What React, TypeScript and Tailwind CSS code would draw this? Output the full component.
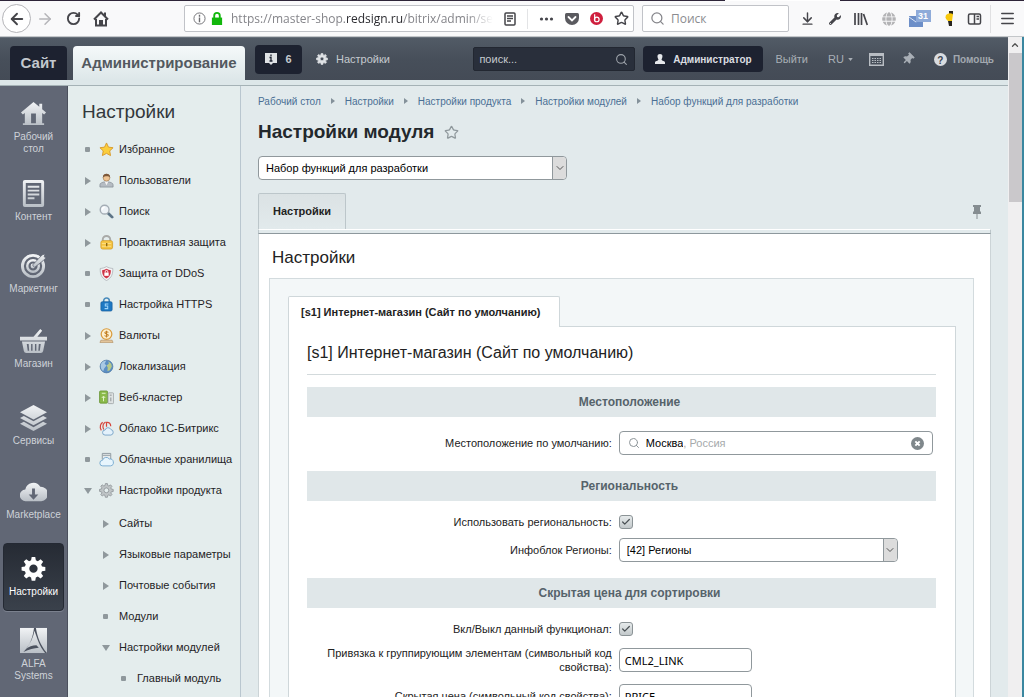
import React from "react";
import {
    ArrowDownToLine,
    ArrowLeft,
    ArrowRight,
    Check,
    ChevronDown,
    ChevronUp,
    Menu,
    RotateCw,
    Search,
    Star,
} from "lucide-react";
import { FaGlobe, FaWrench, FaThumbtack } from "react-icons/fa";

type IconName =
    | "star"
    | "user"
    | "search"
    | "lock"
    | "shield"
    | "https"
    | "coin"
    | "globe"
    | "cluster"
    | "cloud1c"
    | "cloud"
    | "gear";

type MenuItem = {
    label: string;
    marker: "dot" | "right" | "down";
    icon?: IconName;
    level?: 1 | 2;
};

const menu: MenuItem[] = [
    { label: "Избранное", marker: "dot", icon: "star" },
    { label: "Пользователи", marker: "right", icon: "user" },
    { label: "Поиск", marker: "right", icon: "search" },
    { label: "Проактивная защита", marker: "right", icon: "lock" },
    { label: "Защита от DDoS", marker: "dot", icon: "shield" },
    { label: "Настройка HTTPS", marker: "dot", icon: "https" },
    { label: "Валюты", marker: "right", icon: "coin" },
    { label: "Локализация", marker: "right", icon: "globe" },
    { label: "Веб-кластер", marker: "right", icon: "cluster" },
    { label: "Облако 1С-Битрикс", marker: "right", icon: "cloud1c" },
    { label: "Облачные хранилища", marker: "dot", icon: "cloud" },
    { label: "Настройки продукта", marker: "down", icon: "gear" },
];

const subMenu: MenuItem[] = [
    { label: "Сайты", marker: "right", level: 1 },
    { label: "Языковые параметры", marker: "right", level: 1 },
    { label: "Почтовые события", marker: "right", level: 1 },
    { label: "Модули", marker: "dot", level: 1 },
    { label: "Настройки модулей", marker: "down", level: 1 },
    { label: "Главный модуль", marker: "dot", level: 2 },
];

const crumbs = [
    "Рабочий стол",
    "Настройки",
    "Настройки продукта",
    "Настройки модулей",
    "Набор функций для разработки",
];

const gearPath =
    "M10.3 1h3.4l.6 3.2 1.9.8 2.7-1.9 2.4 2.4-1.9 2.7.8 1.9 3.2.6v3.4l-3.2.6-.8 1.9 1.9 2.7-2.4 2.4-2.7-1.9-1.9.8-.6 3.2h-3.4l-.6-3.2-1.9-.8-2.7 1.9-2.4-2.4 1.9-2.7-.8-1.9L.6 14v-3.4l3.2-.6.8-1.9-1.9-2.7L5.100 3.100l2.700 1.900 1.900-.8z M12 8.200a4 4 0 1 0 0 8 4 4 0 0 0 0-8z";

function MenuIcon({ name }: { name: IconName }) {
    return (
        <svg viewBox="0 0 16 16" className="w-[15px] h-[15px] shrink-0" aria-hidden="true">
            {name === "star" && (
                <path d="M8 1l2.100 4.500 4.900.6-3.600 3.400.9 5L8 12.100l-4.400 2.400.9-5L1 6.100l4.900-.6z" fill="#fbce3c" stroke="#d79a2b" />
            )}
            {name === "user" && (
                <>
                    <path d="M1 15v-2.500c0-2 3-2.500 4.500-3h5c1.500.5 4.500 1 4.500 3V15z" fill="#b5bcc3" stroke="#858d95" strokeWidth=".8" />
                    <path d="M6 9h4l-2 4z" fill="#f5f5f5" />
                    <circle cx="8" cy="5" r="3.600" fill="#efc494" stroke="#a17a50" strokeWidth=".7" />
                    <path d="M4.200 5C3.500-.5 12.500-.5 11.800 5 10.500 3 6 3 4.200 5z" fill="#7c583b" />
                </>
            )}
            {name === "search" && (
                <>
                    <path d="M9.500 9.500l4.500 4.500" stroke="#5d7486" strokeWidth="3" strokeLinecap="round" />
                    <circle cx="6" cy="6" r="4.700" fill="#eef3f7" stroke="#a4adb5" strokeWidth="1.500" />
                    <path d="M3.500 6a2.500 2.500 0 0 1 2.500-2.500" stroke="#fff" strokeWidth="1.500" fill="none" />
                </>
            )}
            {name === "lock" && (
                <>
                    <path d="M4 7V5a4 4 0 0 1 8 0v2" fill="none" stroke="#a9aaa8" strokeWidth="2" />
                    <rect x="2" y="6" width="12.500" height="9" rx="2" fill="#f5c441" stroke="#d29a22" strokeWidth=".8" />
                    <path d="M3 9h10M3 12h10" stroke="#fde08a" />
                    <path d="M8.200 8.500v3.500" stroke="#8d6712" strokeWidth="1.500" />
                </>
            )}
            {name === "shield" && (
                <>
                    <path d="M8 .6c2.200 1.400 4.400 1.900 6.700 2 .2 5.500-1 10-6.700 12.900C2.300 12.600 1.100 8.100 1.300 2.600 3.600 2.500 5.800 2 8 .6z" fill="#f2f3f4" stroke="#a8aeb3" strokeWidth=".8" />
                    <path d="M8 3c1.500 1 3 1.300 4.700 1.400 0 3.800-1 6.800-4.700 8.800-3.700-2-4.700-5-4.700-8.800C5 4.300 6.500 4 8 3z" fill="#cf3446" />
                    <path d="M6.700 7V6a1.300 1.300 0 0 1 2.600 0v1" stroke="#fff" fill="none" />
                    <rect x="5.700" y="7" width="4.600" height="3.500" fill="#fff" />
                </>
            )}
            {name === "https" && (
                <>
                    <path d="M5 6V4a3 3 0 0 1 6 0v2" fill="none" stroke="#4a8cbc" strokeWidth="1.700" />
                    <rect x="2" y="5" width="12" height="10" rx="1.500" fill="#1e78c2" stroke="#145c9b" strokeWidth=".7" />
                    <path d="M10 7.500H6.700v2.200h2.600v2.700H6" fill="none" stroke="#9fd5fb" strokeWidth="1.100" />
                </>
            )}
            {name === "coin" && (
                <>
                    <path d="M2 13h12l1 2.500H1z" fill="#e3c59a" stroke="#ac8657" strokeWidth=".6" />
                    <circle cx="8" cy="6.500" r="5.700" fill="#fdf0cf" stroke="#d99a3c" strokeWidth="1.300" />
                    <path d="M10 4.800c-1-1.300-4-1-3.700.5.300 1.300 3.500.9 3.600 2.300.1 1.600-2.900 1.700-4 .4M8 3v7" fill="none" stroke="#c27f25" strokeWidth="1.100" />
                </>
            )}
            {name === "globe" && (
                <>
                    <circle cx="8" cy="8" r="6.800" fill="#5b8ec4" stroke="#45719e" strokeWidth=".7" />
                    <path d="M2 5.500c1.500-3 4-3.700 5.500-3.500L6 5l2 2-2.500 3-1 3C2 11 1.500 8 2 5.500z" fill="#a8c9e4" />
                    <path d="M10 2.500l3 2.500.7 3-2.200 4-2.500 1 .3-4L8 7l2.500-2z" fill="#b7c98a" />
                </>
            )}
            {name === "cluster" && (
                <>
                    <rect x=".6" y="1" width="8.500" height="13" rx="1" fill="#8aba4a" stroke="#628f2b" strokeWidth=".8" />
                    <path d="M3 3.500h4M4.800 12V7M3 8.500L4.800 6.500 6.600 8.500" stroke="#e6f5cf" fill="none" />
                    <rect x="9.600" y="3" width="6" height="11.500" rx="1" fill="#dfe3e3" stroke="#979e9f" strokeWidth=".8" />
                    <path d="M11.500 5.500h2M12.600 8v4" stroke="#899092" />
                </>
            )}
            {name === "cloud1c" && (
                <>
                    <path d="M2.500 10C0 6 2 2.500 4 1.500M5 9C3 5 5 2 7 1M8 6V1.500c3-.5 4.500 1.500 4.500 4" stroke="#d6463c" strokeWidth="1.300" fill="none" />
                    <path d="M6.500 15a2.700 2.700 0 0 1 0-5.400 3.300 3.300 0 0 1 6.200-.5A3 3 0 0 1 12.700 15z" fill="#e3f1fb" stroke="#6e9cc4" strokeWidth=".9" />
                </>
            )}
            {name === "cloud" && (
                <>
                    <path d="M3.500 8V1.500h9V8M4 3.500h8" stroke="#8c979f" fill="#e8ebec" />
                    <path d="M4 14.800a3 3 0 0 1-.2-6A4 4 0 0 1 11 7.500a3.700 3.700 0 0 1 1.300 7.300z" fill="#e7f5fd" stroke="#6ba3cc" strokeWidth=".9" />
                </>
            )}
            {name === "gear" && (
                <g transform="translate(.2 0) scale(.64)">
                    <path d={gearPath} fill="#bfc4c6" stroke="#868c8f" strokeWidth="1.200" fillRule="evenodd" />
                </g>
            )}
        </svg>
    );
}

function Marker({ type }: { type: MenuItem["marker"] }) {
    return (
        <svg viewBox="0 0 8 8" className="w-2 h-2 shrink-0" fill="#8f989c" aria-hidden="true">
            {type === "dot" && <rect x="1" y="1" width="5" height="5" rx="1" />}
            {type === "right" && <path d="M1 0l6 4-6 4z" />}
            {type === "down" && <path d="M0 1h8L4 7z" />}
        </svg>
    );
}

function MenuRow({ item }: { item: MenuItem }) {
    const indent = item.level === 2 ? "pl-[52px]" : item.level === 1 ? "pl-[34px]" : "pl-4";
    return (
        <li>
            <a
                href="#"
                className={`flex items-center h-[31px] whitespace-nowrap text-[11px] text-[#1f2326] ${indent}`}
            >
                <Marker type={item.marker} />
                {item.icon ? (
                    <span className="pl-[7px] pr-[5px]">
                        <MenuIcon name={item.icon} />
                    </span>
                ) : (
                    <span className="w-[9px]" />
                )}
                {item.label}
            </a>
        </li>
    );
}

const railGradient = (
    <defs>
        <linearGradient id="metal" x1="0" y1="0" x2="0" y2="1">
            <stop offset="0" stopColor="#f1f3f5" />
            <stop offset="1" stopColor="#b9bfc6" />
        </linearGradient>
    </defs>
);

const rail = [
    {
        label: "Рабочий стол",
        height: "h-[84px]",
        icon: (
            <path d="M14 2L1 13l2 2 2-1.500V24H3v2h22v-2h-2V13.500l2 1.500 2-2-4-3.500V4h-3v3zM11.500 14h5v10h-5z" fillRule="evenodd" />
        ),
    },
    {
        label: "Контент",
        height: "h-[64px]",
        icon: (
            <path d="M5 0h18q2 0 2 2v24q0 2-2 2H5q-2 0-2-2V2q0-2 2-2zM6 3v22h16V3zM8 6h12v2H8zm0 4h12v2H8zm0 4h12v2H8zm0 4h7v2H8z" fillRule="evenodd" />
        ),
    },
    {
        label: "Маркетинг",
        height: "h-[80px]",
        icon: (
            <>
                <g fill="none" stroke="url(#metal)">
                    <circle cx="13.500" cy="14.500" r="11" strokeWidth="3" />
                    <circle cx="13.500" cy="14.500" r="6" strokeWidth="2.500" />
                </g>
                <circle cx="13.500" cy="14.500" r="2.500" />
                <path d="M13 13.500L23 3l3-1-1 3 2 1-3 3-9 7z" stroke="#616775" strokeWidth=".8" />
            </>
        ),
    },
    {
        label: "Магазин",
        height: "h-[70px]",
        icon: (
            <path d="M0 10h14l7-8 2 2-5 6h10v4H0zM2 15h24l-2 10q-.5 2-2.500 2h-15Q4.500 27 4 25zM7 17.500l1 7h1.500l-.5-7zm4.500 0v7H13v-7zm4 0v7H17v-7zm4 0l-.5 7h1.500l1-7z" fillRule="evenodd" />
        ),
    },
    {
        label: "Сервисы",
        height: "h-[84px]",
        icon: (
            <path d="M14 1l14 7.500L14 16 0 8.500zM4 12.500l10 5.500 10-5.500 4 2L14 22 0 14.500zM4 18.500l10 5.500 10-5.500 4 2L14 28 0 20.500z" />
        ),
    },
    {
        label: "Marketplace",
        height: "h-[64px]",
        icon: (
            <path d="M6 24a6 6 0 0 1-.5-12A8.500 8.500 0 0 1 21 9a7.500 7.500 0 0 1 1 15zM12.500 11v6H9l5 5.500 5-5.500h-3.500v-6z" fillRule="evenodd" />
        ),
    },
    {
        label: "Настройки",
        height: "h-[68px] my-[11px]",
        active: true,
        icon: (
            <g transform="translate(1 1) scale(1.080)">
                <path d={gearPath} fill="#fff" fillRule="evenodd" />
            </g>
        ),
    },
    {
        label: "ALFA Systems",
        height: "h-[66px]",
        icon: (
            <>
                <path d="M0 1h28v26H0z" />
                <path d="M14.500 1c-1 9-4 18-11 25 6-3 11-4 16-4.500L17 19c-4 0-8 1.500-11 4C11 17 14 10 15 4c3 8 5 16 11 23h2C21 19 18 10 16.500 1z" fill="#4c525f" />
            </>
        ),
    },
];

function Rail() {
    return (
        <nav className="w-[68px] shrink-0 bg-[#616775] border-r border-[#4b505d]" aria-label="Разделы">
            {rail.map((item) => (
                <a
                    key={item.label}
                    href="#"
                    className={`flex flex-col items-center justify-center gap-1 pb-0.5 mx-[3px] rounded text-center text-[10px] leading-3 ${item.height} ${
                        item.active
                            ? "bg-linear-to-b from-[#262b34] to-[#3a414b] border border-[#242933] text-white shadow-[0_1px_0_#7b818e]"
                            : "text-[#ced2d8]"
                    }`}
                >
                    <svg viewBox="0 0 28 28" className="w-[27px] h-[27px] shrink-0" fill="url(#metal)" aria-hidden="true">
                        {railGradient}
                        {item.icon}
                    </svg>
                    <span className="w-min">{item.label}</span>
                </a>
            ))}
        </nav>
    );
}

function BrowserBar() {
    return (
        <div className="shrink-0 bg-[#f9f9fa] border-b border-[#c4c7ca] text-[#45454a]">
            <div className="flex h-px">
                <div className="flex-1 bg-[#2d2438]" />
                <div className="w-[115px] bg-white" />
                <div className="w-[184px] bg-[#2d2438]" />
            </div>
            <div className="flex items-center h-[35px] px-[2px]">
                <button aria-label="Назад" className="grid place-items-center w-[29px] h-[29px] rounded-full border border-[#b4b4b8] bg-white">
                    <ArrowLeft size={18} strokeWidth={2.5} />
                </button>
                <button aria-label="Вперёд" className="grid place-items-center w-7 text-[#b5b5b9]">
                    <ArrowRight size={18} />
                </button>
                <button aria-label="Обновить" className="grid place-items-center w-7">
                    <RotateCw size={15} strokeWidth={3} />
                </button>
                <button aria-label="Домой" className="grid place-items-center w-7">
                    <svg viewBox="0 0 16 16" className="w-4 h-4">
                        <path d="M1 8.500L8 1.500l7 7M3 8v6.500h10V8" fill="none" stroke="currentColor" strokeWidth="2" />
                        <path d="M6 9h4v5H6zM11 1.500h2V5h-2z" fill="currentColor" />
                    </svg>
                </button>
                <div className="flex flex-1 items-center h-[27px] ml-[69px] px-2 border border-[#c1c3c8] rounded-xs bg-white">
                    <svg viewBox="0 0 14 14" className="w-[13px] h-[13px] shrink-0" fill="none" stroke="#6c6c70">
                        <circle cx="7" cy="7" r="6" />
                        <path d="M7 6v5M7 3v2" strokeWidth="1.500" />
                    </svg>
                    <svg viewBox="0 0 12 14" className="w-3 h-[13px] ml-[5px] shrink-0" fill="#12b70c">
                        <path d="M.5 6h11v8H.5z" />
                        <path d="M3 7V4a3 3 0 0 1 6 0v3" fill="none" stroke="#12b70c" strokeWidth="2" />
                    </svg>
                    <div className="ml-2 whitespace-nowrap font-['Open_Sans',sans-serif] text-[12px] text-[#85858a] mask-r-from-90%">
                        https://master-shop.<span className="text-[#2b2b30]">redsign.ru</span>/bitrix/admin/se
                    </div>
                    <div className="flex flex-1 items-center justify-end gap-[11px] mr-[-4px]">
                        <svg viewBox="0 0 12 14" className="w-3 h-3.5" fill="none" stroke="currentColor" strokeWidth="1.500">
                            <rect x="1" y="1" width="10" height="12" rx="1" />
                            <path d="M3 4h6M3 6.500h6M3 9h4" />
                        </svg>
                        <span className="w-px h-5 bg-[#e3e4e6]" />
                        <svg viewBox="0 0 14 4" className="w-[15px] h-1" fill="currentColor">
                            <circle cx="2" cy="2" r="1.600" />
                            <circle cx="7" cy="2" r="1.600" />
                            <circle cx="12" cy="2" r="1.600" />
                        </svg>
                        <svg viewBox="0 0 14 12" className="w-3.5 h-3">
                            <path d="M1.500 0h11Q14 0 14 1.500V5a7 7 0 0 1-14 0V1.500Q0 0 1.500 0z" fill="#5a5a5f" />
                            <path d="M3.500 4L7 7.500 10.500 4" fill="none" stroke="#fff" strokeWidth="1.800" strokeLinecap="round" />
                        </svg>
                        <svg viewBox="0 0 14 14" className="w-[13px] h-[13px]">
                            <circle cx="7" cy="7" r="7" fill="#cf1f3e" />
                            <path d="M5 2.500v6" stroke="#fff" strokeWidth="1.300" />
                            <circle cx="7.300" cy="8" r="2.500" fill="none" stroke="#fff" strokeWidth="1.300" />
                        </svg>
                        <Star size={15} strokeWidth={2.300} />
                    </div>
                </div>
                <label className="flex items-center w-[147px] h-[27px] ml-2 px-[7px] gap-1.5 border border-[#c1c3c8] rounded-xs bg-white">
                    <Search size={15} className="shrink-0 text-[#85858a]" />
                    <input
                        aria-label="Поиск в интернете"
                        placeholder="Поиск"
                        className="w-full min-w-0 font-['Open_Sans',sans-serif] text-[12px] placeholder:text-[#8b8b90] outline-none"
                    />
                </label>
                <div className="flex items-center justify-between w-[182px] ml-[11px]">
                    <ArrowDownToLine size={15} strokeWidth={2.300} />
                    <FaWrench size={12} />
                    <svg viewBox="0 0 14 14" className="w-3.5 h-3.5" fill="none" stroke="currentColor" strokeWidth="1.700">
                        <path d="M1 1v12M4.500 1v12M7.500 1v12M9.500 2l3.800 11" />
                    </svg>
                    <FaGlobe size={14} className="text-[#b3b3b5]" />
                    <svg viewBox="0 0 22 18" className="w-[22px] h-[18px]">
                        <path d="M0 6h14v11H0z" fill="#6d8fc8" />
                        <path d="M0 7l7 5 7-5" fill="none" stroke="#dbe5f6" />
                        <path d="M7 0h15v12H7z" fill="#8fabd9" />
                        <text x="9" y="9" fontSize="9" fontWeight="700" fontFamily="Liberation Sans, sans-serif" fill="#fff">31</text>
                    </svg>
                    <svg viewBox="0 0 9 15" className="w-[9px] h-[15px]">
                        <path d="M4 0h4v4H4zM3 10h4v5H4z" fill="#29261f" />
                        <path d="M1 4q3-3 7-1l-1 7H3Q-.5 8 1 4z" fill="#f8c80c" />
                    </svg>
                    <svg viewBox="0 0 14 12" className="w-[15px] h-3" fill="none" stroke="currentColor" strokeWidth="1.500">
                        <rect x="1" y="1" width="12" height="10" rx="1.500" />
                        <path d="M7 1v10M9 3.500h2.500M9 6h2.500" />
                    </svg>
                </div>
                <span className="w-px h-7 ml-2 bg-[#e0e0e2]" />
                <button aria-label="Меню" className="ml-2 mr-1.5">
                    <Menu size={17} strokeWidth={2.300} />
                </button>
            </div>
        </div>
    );
}

function AdminHeader() {
    return (
        <header className="shrink-0 bg-[#dde7e9] border-b border-[#a5b2b6]">
            <div className="flex items-end h-[43px] bg-linear-to-b from-[#525b66] via-[#474f5a] to-[#444b56] border-t border-[#67707a] pl-2.5 text-[11px] text-[#c5cacf]">
                <a href="#" className="flex items-center justify-center w-[57px] h-[34px] rounded-t bg-[#1d2230] text-[15px] font-bold text-[#c3c8ce]">
                    Сайт
                </a>
                <a href="#" className="flex items-center justify-center w-[172px] h-[34px] ml-1.5 rounded-t bg-linear-to-b from-[#f5f9fa] to-[#dde7e9] text-[15px] font-bold text-[#53595f]">
                    Администрирование
                </a>
                <div className="flex flex-1 items-center h-full">
                    <button className="flex items-center justify-center gap-2 w-[47px] h-[29px] ml-2.5 rounded bg-[#1d2230] font-bold">
                        <svg viewBox="0 0 12 12" className="w-3 h-3">
                            <path d="M0 0h12v10H8l-2 2-2-2H0z" fill="#dfe2e5" />
                            <path d="M6 1.500v1.700M4.500 4.500H6v3.500M4.500 8h3" stroke="#1d2230" strokeWidth="1.300" fill="none" />
                        </svg>
                        6
                    </button>
                    <a href="#" className="flex items-center gap-2 ml-3.5">
                        <svg viewBox="0 0 24 25" className="w-3 h-3" fill="#dfe2e5">
                            <path d={gearPath} fillRule="evenodd" stroke="#dfe2e5" strokeWidth="1.500" />
                        </svg>
                        Настройки
                    </a>
                    <label className="flex items-center w-[162px] h-6 ml-auto pl-[5px] pr-1.5 rounded-xs bg-[#292f3b] border border-[#222731]">
                        <input aria-label="поиск" placeholder="поиск..." className="w-full min-w-0 placeholder:text-[#c5cacf] outline-none" />
                        <Search size={13} className="shrink-0 text-[#9ea4ab]" />
                    </label>
                    <a href="#" className="flex items-center justify-center gap-2 w-[120px] h-[26px] ml-2 rounded bg-[#1d2230] text-[10px] font-bold text-[#dadde1]">
                        <svg viewBox="0 0 10 10" className="w-2.5 h-2.5" fill="#e6e8eb">
                            <path d="M5 0c3 0 3 3 1.500 5.500C7 7 10 7 10 8.500V10H0V8.500C0 7 3 7 3.500 5.500 2 3 2 0 5 0z" />
                        </svg>
                        Администратор
                    </a>
                    <a href="#" className="ml-3 text-[#a9afb6]">Выйти</a>
                    <button className="flex items-center gap-1 ml-5 text-[#a9afb6]">
                        RU
                        <svg viewBox="0 0 6 4" className="w-[5px] h-[3px]" fill="currentColor">
                            <path d="M0 0h6L3 4z" />
                        </svg>
                    </button>
                    <svg viewBox="0 0 15 13" className="w-[15px] h-[13px] ml-4" fill="none" stroke="#b9bec4">
                        <path d="M.7.700h13.600v11.600H.7z" strokeWidth="1.400" />
                        <path d="M1 2h13" strokeWidth="2" />
                        <path d="M3 5.500h9M3 7.500h9M3 9.500h9" strokeDasharray="1.500 1" />
                    </svg>
                    <FaThumbtack size={12} className="ml-[18px] rotate-45 text-[#a9afb6]" />
                    <a href="#" className="flex items-center gap-1.5 ml-5 mr-3.5 text-[10px] font-bold text-[#a2a8af]">
                        <span className="grid place-items-center w-[13px] h-[13px] rounded-full bg-[#d9dce0] text-[#3d444f]">?</span>
                        Помощь
                    </a>
                </div>
            </div>
            <div className="h-[5px]" />
        </header>
    );
}

function SelectBox({ id, value, width }: { id: string; value: string; width: string }) {
    return (
        <div className={`relative h-6 max-w-full ${width}`}>
            <select
                id={id}
                className="block appearance-none w-full h-full pl-[7px] pr-5 text-[11px] leading-4 text-black bg-white border border-[#90989c] rounded"
            >
                <option>{value}</option>
            </select>
            <span className="absolute inset-y-px right-px w-3.5 flex items-center justify-center rounded-r-sm border-l border-[#90989c] bg-[#dcdcdc] pointer-events-none">
                <ChevronDown size={12} className="shrink-0 text-[#555]" />
            </span>
        </div>
    );
}

function Section({ title, children }: { title: string; children: React.ReactNode }) {
    return (
        <section>
            <h4 className="flex items-center justify-center h-[30px] pl-4 bg-[#e0e7e9] text-[12px] font-bold text-[#56636b]">
                {title}
            </h4>
            {children}
        </section>
    );
}

function Row({ id, label, children }: { id: string; label: string; children: React.ReactNode }) {
    return (
        <div className="grid grid-cols-[49fr_51fr] gap-[7px] items-center">
            <label htmlFor={id} className="text-right text-[11px] leading-[14px] text-[#222]">
                {label}
            </label>
            {children}
        </div>
    );
}

function CheckBox({ id }: { id: string }) {
    return (
        <span className="relative w-3.5 h-3.5">
            <input
                id={id}
                type="checkbox"
                defaultChecked
                className="block appearance-none w-3.5 h-3.5 rounded-[3px] border border-[#8b9396] bg-linear-to-b from-[#e6eaeb] to-[#c3c9cb]"
            />
            <Check size={10} strokeWidth={3} className="absolute top-0.5 left-0.5 text-[#4a5054] pointer-events-none" />
        </span>
    );
}

function TextBox({ id, value }: { id: string; value: string }) {
    return (
        <input
            id={id}
            defaultValue={value}
            className="w-[133px] h-6 px-[5px] border border-[#90989c] rounded bg-white text-[11px] text-black font-['Noto_Sans',sans-serif]"
        />
    );
}

function SettingsForm() {
    return (
        <div className="bg-white border-x border-[#ccd4d7] pl-2.5 pr-4">
            <h2 className="pl-[3px] pt-[13px] text-[17px] leading-[22px] text-[#222]">Настройки</h2>
            <div className="mt-[9px] border border-[#d3dbde] bg-[#f3f7f8] pt-[17px] pl-[18px] pr-[17px]">
                <div className="flex items-end">
                    <button className="h-[31px] pl-3 pr-[18px] -mb-px z-10 border border-b-0 border-[#cfd7da] rounded-t-xs bg-white text-[11px] font-bold text-[#222] whitespace-nowrap">
                        [s1] Интернет-магазин (Сайт по умолчанию)
                    </button>
                </div>
                <div className="border border-[#cfd7da] bg-white pl-[18px] pr-[19px] pt-[15px]">
                    <h3 className="pb-2.5 border-b border-[#d3dadc] text-[16px] leading-[22px] text-[#222]">
                        [s1] Интернет-магазин (Сайт по умолчанию)
                    </h3>
                    <div className="pt-3">
                        <Section title="Местоположение">
                            <div className="pt-3.5 pb-4">
                                <Row id="location" label="Местоположение по умолчанию:">
                                    <div className="flex items-center h-6 mr-[3px] px-2 border border-[#90989c] rounded bg-white text-[11px]">
                                        <Search size={12} className="shrink-0 text-[#8d9599]" />
                                        <input id="location" defaultValue="Москва" className="field-sizing-content ml-1.5 text-black outline-none" />
                                        <span className="text-[#a5a9ab]">, Россия</span>
                                        <button aria-label="Очистить" className="ml-auto">
                                            <svg viewBox="0 0 12 12" className="w-[13px] h-[13px]">
                                                <circle cx="6" cy="6" r="6" fill="#7f878b" />
                                                <path d="M4 4l4 4M8 4L4 8" stroke="#fff" strokeWidth="1.800" />
                                            </svg>
                                        </button>
                                    </div>
                                </Row>
                            </div>
                        </Section>
                        <Section title="Региональность">
                            <div className="flex flex-col gap-[9px] pt-3.5 pb-4">
                                <Row id="regional" label="Использовать региональность:">
                                    <CheckBox id="regional" />
                                </Row>
                                <Row id="iblock" label="Инфоблок Регионы:">
                                    <SelectBox id="iblock" value="[42] Регионы" width="w-[279px]" />
                                </Row>
                            </div>
                        </Section>
                        <Section title="Скрытая цена для сортировки">
                            <div className="flex flex-col gap-[10px] pt-3.5">
                                <Row id="price_on" label="Вкл/Выкл данный функционал:">
                                    <CheckBox id="price_on" />
                                </Row>
                                <Row id="link" label="Привязка к группирующим элементам (символьный код свойства):">
                                    <TextBox id="link" value="CML2_LINK" />
                                </Row>
                                <Row id="price" label="Скрытая цена (символьный код свойства):">
                                    <TextBox id="price" value="PRICE" />
                                </Row>
                            </div>
                        </Section>
                    </div>
                </div>
            </div>
        </div>
    );
}

export default function App() {
    return (
        <div className="flex flex-col h-screen overflow-hidden font-['Liberation_Sans',Arial,sans-serif]">
            <BrowserBar />
            <div className="flex flex-1 min-h-0 border-r-2 border-[#3a87a0]">
                <div className="flex flex-col flex-1 min-w-0">
                    <AdminHeader />
                    <div className="flex flex-1 min-h-0">
                        <Rail />
                        <nav className="w-[173px] shrink-0 overflow-hidden bg-[#e4eded] border-r border-[#b9c6cf]" aria-label="Настройки">
                            <h2 className="pl-3.5 pt-3 text-[19px] leading-7 text-[#33383c]">Настройки</h2>
                            <ul className="pt-2">
                                {menu.map((item) => (
                                    <MenuRow key={item.label} item={item} />
                                ))}
                            </ul>
                            <ul className="pt-0.5">
                                {subMenu.map((item) => (
                                    <MenuRow key={item.label} item={item} />
                                ))}
                            </ul>
                        </nav>
                        <main className="flex-1 min-w-0 overflow-hidden bg-[#e2eaec] px-[17px]">
                            <div className="flex items-center h-[30px] text-[10px] whitespace-nowrap">
                                {crumbs.map((crumb, i) => (
                                    <React.Fragment key={crumb}>
                                        {i > 0 && (
                                            <svg viewBox="0 0 4 6" className="w-1 h-1.5 mx-2.5" fill="#84919a">
                                                <path d="M0 0l4 3-4 3z" />
                                            </svg>
                                        )}
                                        <a href="#" className="text-[#4a6f94]">{crumb}</a>
                                    </React.Fragment>
                                ))}
                            </div>
                            <h1 className="flex items-center gap-2.5 h-8 text-[19px] font-bold text-[#23282c]">
                                Настройки модуля
                                <Star size={15} className="text-[#8f989c]" />
                            </h1>
                            <div className="pt-2">
                                <label htmlFor="module" className="sr-only">Модуль</label>
                                <SelectBox id="module" value="Набор функций для разработки" width="w-[309px]" />
                            </div>
                            <div className="flex items-end justify-between mt-[13px]">
                                <button className="h-9 px-3.5 border border-b-0 border-[#bcc6ca] rounded-t-xs bg-linear-to-b from-[#dbe2e4] to-[#e2eaec] text-[11px] font-bold text-[#222]">
                                    Настройки
                                </button>
                                <svg viewBox="0 0 8 14" className="w-2 h-3.5 mr-2.5 mb-2.5" fill="#858d91">
                                    <path d="M0 0h8v2H7v4l1 1v2H4.500v5h-1V9H0V7l1-1V2H0z" />
                                </svg>
                            </div>
                            <div className="h-[5px] border-t border-t-white border-x border-x-[#bcc6ca] border-b border-b-[#8d989d] bg-[#e2eaec]" />
                            <SettingsForm />
                        </main>
                    </div>
                </div>
                <div className="w-3.5 shrink-0 bg-[#f0eff0]">
                    <div className="grid place-items-center h-4">
                        <ChevronUp size={10} strokeWidth={3} className="text-[#505050]" />
                    </div>
                    <div className="h-[149px] ml-px bg-[#cac8cb]" />
                </div>
            </div>
        </div>
    );
}
